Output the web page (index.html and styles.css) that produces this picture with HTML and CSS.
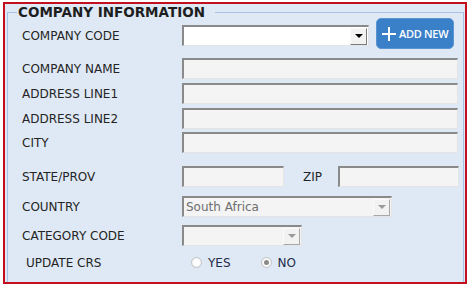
FILE: index.html
```html
<!DOCTYPE html>
<html lang="en">
<head>
  <meta charset="UTF-8" />
  <meta name="viewport" content="width=device-width, initial-scale=1.0" />
  <title>Company Information</title>
  <link rel="stylesheet" href="styles.css">
</head>
<body>
  <div class="panel">
    <fieldset class="group">
      <legend>COMPANY INFORMATION</legend>

      <div class="row row-code">
        <label class="lbl">COMPANY CODE</label>
        <div class="combo combo-code">
          <span class="combo-text"></span>
          <span class="combo-btn"><span class="arrow"></span></span>
        </div>
        <button class="add-btn" type="button">
          <svg width="16" height="16" viewBox="0 0 16 16"><path d="M8 1v14M1 8h14" stroke="#fff" stroke-width="2" fill="none"/></svg>
          <span>ADD NEW</span>
        </button>
      </div>

      <div class="row row-name">
        <label class="lbl">COMPANY NAME</label>
        <input class="field wide" type="text" readonly>
      </div>
      <div class="row row-addr1">
        <label class="lbl">ADDRESS LINE1</label>
        <input class="field wide" type="text" readonly>
      </div>
      <div class="row row-addr2">
        <label class="lbl">ADDRESS LINE2</label>
        <input class="field wide" type="text" readonly>
      </div>
      <div class="row row-city">
        <label class="lbl">CITY</label>
        <input class="field wide" type="text" readonly>
      </div>

      <div class="row row-state">
        <label class="lbl">STATE/PROV</label>
        <input class="field state" type="text" readonly>
        <label class="zip-lbl">ZIP</label>
        <input class="field zip" type="text" readonly>
      </div>

      <div class="row row-country">
        <label class="lbl">COUNTRY</label>
        <div class="combo combo-country disabled">
          <span class="combo-text">South Africa</span>
          <span class="combo-btn"><span class="arrow"></span></span>
        </div>
      </div>

      <div class="row row-category">
        <label class="lbl">CATEGORY CODE</label>
        <div class="combo combo-category disabled">
          <span class="combo-text"></span>
          <span class="combo-btn"><span class="arrow"></span></span>
        </div>
      </div>

      <div class="row row-crs">
        <label class="lbl lbl-indent">UPDATE CRS</label>
        <div class="radios">
          <span class="radio"></span><span class="radio-text">YES</span>
          <span class="radio checked"></span><span class="radio-text">NO</span>
        </div>
      </div>
    </fieldset>
  </div>
</body>
</html>
```

FILE: styles.css
```css
* {
  margin: 0;
  padding: 0;
  box-sizing: border-box;
}

body {
  font-family: "DejaVu Sans", Verdana, sans-serif;
  font-size: 12px;
  color: #242424;
  background: #fff;
}

.panel {
  margin: 2px 0 0 3px;
  width: 464px;
  height: 282px;
  border: 2px solid #c40f1f;
  background: #dfe9f5;
  overflow: hidden;
}

.group {
  margin: 0 1px 0 2px;
  height: 290px;
  border: 1px solid #a6c3e6;
  border-bottom: none;
  padding: 5px 0 0 14px;
}

.group legend {
  margin-left: -5px;
  padding: 0 10px 0 1px;
  font-size: 13.5px;
  font-weight: bold;
  line-height: 16px;
  color: #1e1e1e;
}

.row {
  display: flex;
  align-items: center;
  height: 21px;
}

.row-name { margin-top: 12px; }
.row-addr1 { margin-top: 4px; }
.row-addr2 { margin-top: 4px; }
.row-city { margin-top: 3px; }
.row-state { margin-top: 13px; }
.row-country { margin-top: 9px; }
.row-category { margin-top: 8px; }
.row-crs { margin-top: 6px; }

.lbl {
  width: 160px;
  flex-shrink: 0;
}

.lbl-indent {
  padding-left: 4px;
}

.field {
  height: 21px;
  background: #f4f4f4;
  border-top: 2px solid #8a8a8a;
  border-left: 2px solid #8a8a8a;
  border-right: 1px solid #e4e4e4;
  border-bottom: 1px solid #e4e4e4;
  outline: none;
  font: inherit;
}

.wide { width: 276px; }
.state { width: 102px; }
.zip { width: 121px; }

.zip-lbl {
  margin-left: 19px;
  width: 35px;
}

.combo {
  display: flex;
  align-items: center;
  height: 21px;
  background: #fff;
  border-top: 2px solid #8a8a8a;
  border-left: 2px solid #8a8a8a;
  border-right: 1px solid #e4e4e4;
  border-bottom: 1px solid #e4e4e4;
}

.combo.disabled {
  background: #f4f4f4;
}

.combo-text {
  flex: 1;
  padding-left: 2px;
  color: #6e6e6e;
  white-space: nowrap;
}

.combo-btn {
  width: 17px;
  height: 17px;
  margin-right: 1px;
  display: flex;
  align-items: center;
  justify-content: center;
  background: #f2f2f2;
  border: 1px solid;
  border-color: #fafafa #7a7a7a #7a7a7a #fafafa;
}

.arrow {
  width: 0;
  height: 0;
  border-left: 4px solid transparent;
  border-right: 4px solid transparent;
  border-top: 4px solid #000;
}

.disabled .combo-btn {
  border-color: #fafafa #a8a8a8 #a8a8a8 #fafafa;
}

.disabled .arrow {
  border-top-color: #9a9a9a;
}

.combo-code { width: 187px; }
.combo-country { width: 210px; }
.combo-category { width: 120px; }

.add-btn {
  align-self: flex-start;
  margin: -7px 0 0 7px;
  width: 78px;
  height: 31px;
  display: flex;
  align-items: center;
  gap: 2px;
  padding-left: 4px;
  background: #3a80c8;
  border: 1px solid #5a95d2;
  border-radius: 5px;
  color: #fff;
  font-family: "Open Sans", sans-serif;
  font-size: 11px;
  font-weight: 600;
  letter-spacing: -0.3px;
}

.radios {
  display: flex;
  align-items: center;
  padding-left: 9px;
}

.radio {
  width: 11px;
  height: 11px;
  border-radius: 50%;
  border: 1px solid #c4c4c4;
  background: radial-gradient(circle, #fff 40%, #e6e6e6 100%);
  display: flex;
  align-items: center;
  justify-content: center;
}

.radio.checked::after {
  content: "";
  width: 5px;
  height: 5px;
  border-radius: 50%;
  background: #8a8a8a;
}

.radio-text {
  margin-left: 6px;
  color: #1f2c4a;
}

.radio-text:nth-of-type(2) {
  margin-right: 30px;
}
```
